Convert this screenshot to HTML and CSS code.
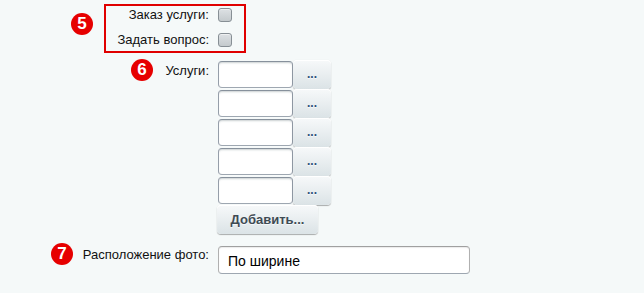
FILE: index.html
```html
<!DOCTYPE html>
<html lang="ru">
<head>
<meta charset="utf-8">
<title>Form</title>
<link rel="stylesheet" href="styles.css">
</head>
<body>
<div class="form">
  <div class="row row-check">
    <label class="label">Заказ услуги:</label>
    <div class="ctrl"><span class="checkbox"></span></div>
  </div>
  <div class="row row-check">
    <label class="label">Задать вопрос:</label>
    <div class="ctrl"><span class="checkbox"></span></div>
  </div>
  <div class="row row-services">
    <label class="label label-top">Услуги:</label>
    <div class="ctrl stack">
      <div class="pick"><span class="input"></span><span class="btn btn-dots">...</span></div>
      <div class="pick"><span class="input"></span><span class="btn btn-dots">...</span></div>
      <div class="pick"><span class="input"></span><span class="btn btn-dots">...</span></div>
      <div class="pick"><span class="input"></span><span class="btn btn-dots">...</span></div>
      <div class="pick"><span class="input"></span><span class="btn btn-dots">...</span></div>
      <span class="btn btn-add">Добавить...</span>
    </div>
  </div>
  <div class="row row-photo">
    <label class="label label-photo">Расположение фото:</label>
    <div class="ctrl"><span class="select">По ширине</span></div>
  </div>

  <div class="highlight"></div>
  <span class="badge badge-5">5</span>
  <span class="badge badge-6">6</span>
  <span class="badge badge-7">7</span>
</div>
</body>
</html>
```
FILE: styles.css
```css
html, body {
  margin: 0;
  padding: 0;
  background: #f5f9f9;
}
body {
  font-family: "Liberation Sans", Arial, sans-serif;
  font-size: 13px;
  color: #000;
  width: 644px;
  height: 293px;
  overflow: hidden;
}
.form {
  position: relative;
  padding-top: 2px;
  height: 291px;
}
.row {
  display: grid;
  grid-template-columns: 209px auto;
  column-gap: 9px;
}
.label {
  text-align: right;
  line-height: 16px;
  white-space: nowrap;
  color: #111;
}
.ctrl {
  display: flex;
}
.row-check {
  height: 25px;
  align-items: center;
}
.checkbox {
  display: block;
  width: 14px;
  height: 14px;
  box-sizing: border-box;
  border: 1px solid #878f95;
  border-radius: 3px;
  background: linear-gradient(#dde1e4, #c4cacd);
  box-shadow: inset 0 1px 0 rgba(255,255,255,0.5);
}
.row-services {
  margin-top: 8px;
}
.label-top {
  padding-top: 3px;
}
.stack {
  flex-direction: column;
  align-items: flex-start;
}
.pick {
  display: flex;
  align-items: center;
  height: 29px;
}
.input {
  display: block;
  width: 75px;
  height: 27px;
  box-sizing: border-box;
  background: #fff;
  border: 1px solid;
  border-color: #87919c #959ea9 #9ea7b1 #959ea9;
  border-radius: 4px;
  box-shadow: 0 1px 0 0 rgba(255,255,255,0.3), inset 0 2px 2px -1px rgba(180,188,191,0.7);
}
.btn {
  display: flex;
  align-items: center;
  justify-content: center;
  height: 29px;
  box-sizing: border-box;
  border-radius: 4px;
  background: linear-gradient(#f7f9fa, #dbe3e6);
  box-shadow: 0 0 1px rgba(0,0,0,0.11), 0 1px 1px rgba(0,0,0,0.3), inset 0 1px #fff, inset 0 0 1px rgba(255,255,255,0.5);
  color: #3f4b54;
  font-weight: bold;
  text-shadow: 0 1px rgba(255,255,255,0.7);
}
.btn-dots {
  width: 38px;
  color: #2e4f7a;
  font-size: 12px;
  padding-bottom: 2px;
}
.btn-add {
  width: 101px;
  margin-left: -1px;
  font-size: 13px;
}
.row-photo {
  margin-top: 12px;
}
.label-photo {
  padding-top: 1px;
}
.select {
  display: flex;
  align-items: center;
  width: 252px;
  height: 28px;
  box-sizing: border-box;
  padding-left: 9px;
  padding-top: 1px;
  background: #fff;
  border: 1px solid;
  border-color: #a0a0a0 #b0b0b0 #9ea7b1 #b0b0b0;
  border-radius: 4px;
  box-shadow: inset 0 1px 1px rgba(0,0,0,0.08);
  font-size: 14px;
}
.highlight {
  position: absolute;
  left: 104px;
  top: 4px;
  width: 142px;
  height: 49px;
  box-sizing: border-box;
  border: 2px solid #e00000;
  pointer-events: none;
}
.badge {
  position: absolute;
  width: 22px;
  height: 22px;
  border-radius: 50%;
  background: #e60000;
  color: #fff;
  font-weight: bold;
  font-size: 17px;
  line-height: 22px;
  text-align: center;
}
.badge-5 { left: 71px; top: 13px; }
.badge-6 { left: 131px; top: 59px; }
.badge-7 { left: 51px; top: 243px; }
```
